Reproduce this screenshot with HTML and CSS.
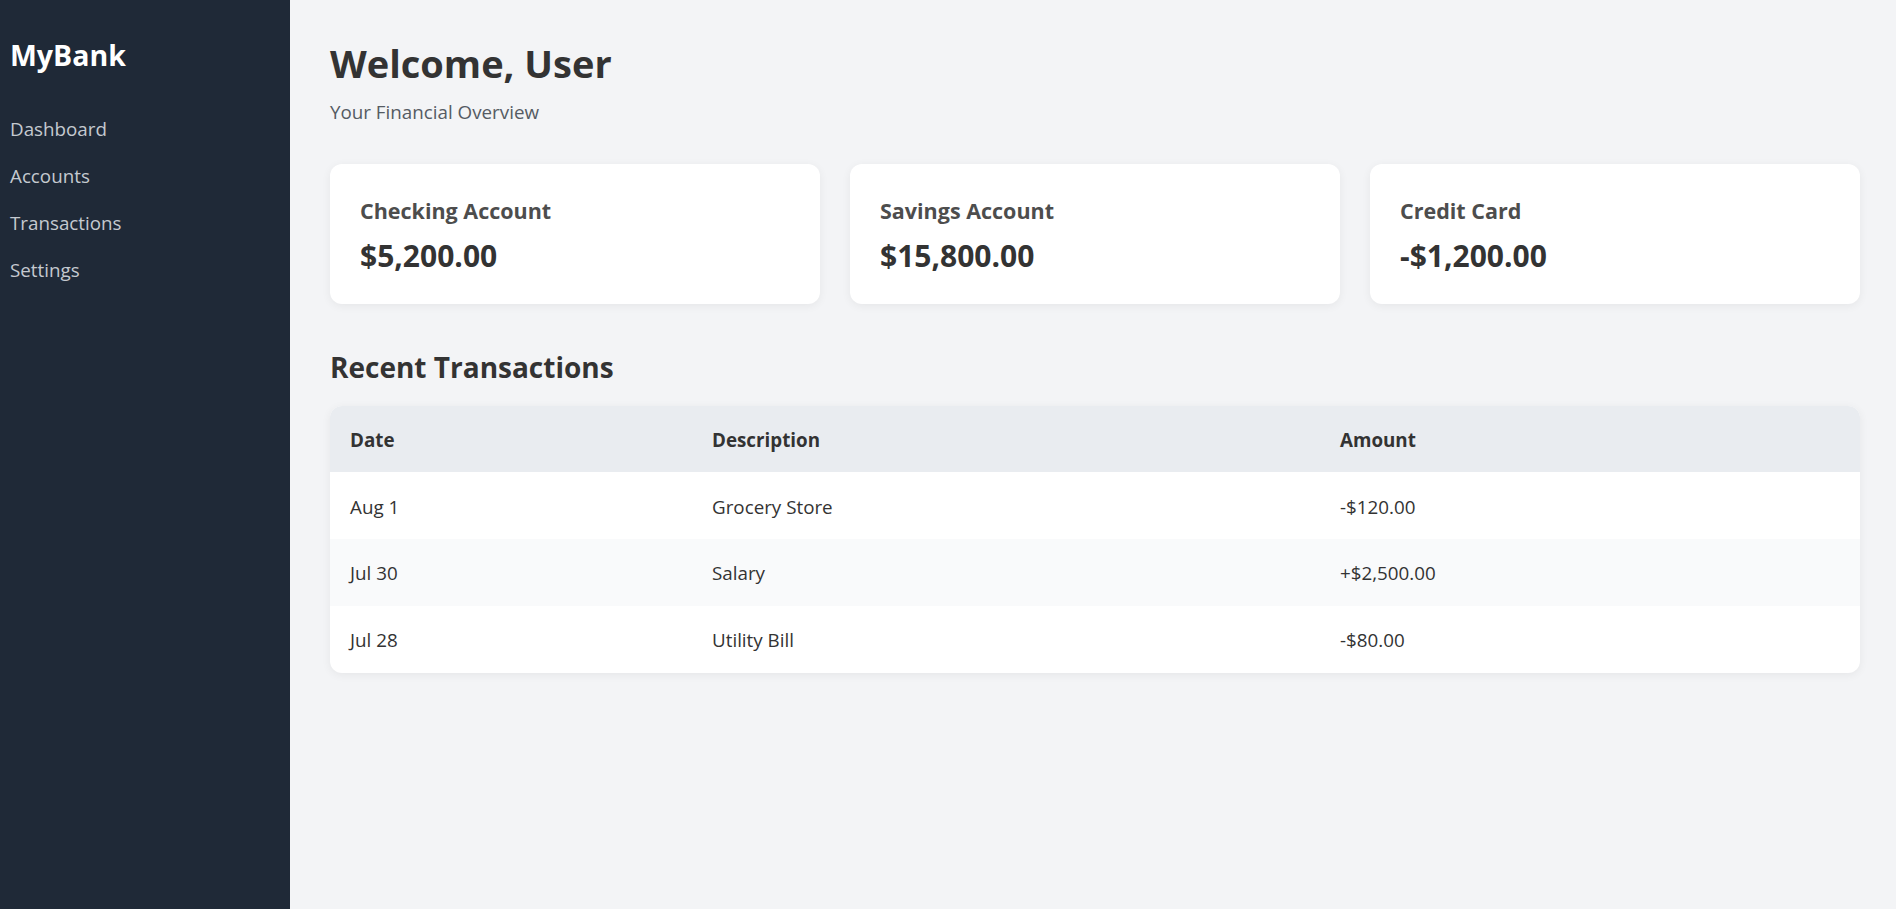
FILE: index.html
```html
<!DOCTYPE html>
<html lang="en">
<head>
<meta charset="utf-8">
<title>MyBank</title>
<link rel="stylesheet" href="styles.css">
</head>
<body>
<div class="app">
  <aside class="sidebar">
    <h2 class="brand">MyBank</h2>
    <nav class="nav">
      <a class="nav-link" href="#">Dashboard</a>
      <a class="nav-link" href="#">Accounts</a>
      <a class="nav-link" href="#">Transactions</a>
      <a class="nav-link" href="#">Settings</a>
    </nav>
  </aside>
  <main class="content">
    <h1 class="title">Welcome, User</h1>
    <p class="subtitle">Your Financial Overview</p>
    <section class="cards">
      <div class="card">
        <h3 class="card-title">Checking Account</h3>
        <p class="card-amount">$5,200.00</p>
      </div>
      <div class="card">
        <h3 class="card-title">Savings Account</h3>
        <p class="card-amount">$15,800.00</p>
      </div>
      <div class="card">
        <h3 class="card-title">Credit Card</h3>
        <p class="card-amount">-$1,200.00</p>
      </div>
    </section>
    <h2 class="section-title">Recent Transactions</h2>
    <div class="table-wrap">
      <table class="tx-table">
        <thead>
          <tr><th class="col-date">Date</th><th class="col-desc">Description</th><th>Amount</th></tr>
        </thead>
        <tbody>
          <tr><td>Aug 1</td><td>Grocery Store</td><td>-$120.00</td></tr>
          <tr><td>Jul 30</td><td>Salary</td><td>+$2,500.00</td></tr>
          <tr><td>Jul 28</td><td>Utility Bill</td><td>-$80.00</td></tr>
        </tbody>
      </table>
    </div>
  </main>
</div>
</body>
</html>
```
FILE: styles.css
```css
* { box-sizing: border-box; }
html, body { margin: 0; padding: 0; height: 100%; }
body {
  font-family: "Segoe UI", "Open Sans", "Noto Sans", sans-serif;
  font-size: 18.8px;
  color: #333333;
  background: #f3f4f6;
}
.app { display: flex; min-height: 100vh; }
.sidebar {
  width: 290px;
  flex-shrink: 0;
  background: #1f2937;
  padding: 38px 10px 0 10px;
}
.brand {
  margin: 0 0 33px 0;
  font-size: 28.5px;
  line-height: 34px;
  font-weight: 700;
  color: #ffffff;
}
.nav { display: flex; flex-direction: column; }
.nav-link {
  display: block;
  padding: 12.5px 0 11.5px 0;
  line-height: 23px;
  color: #c5c9d0;
  text-decoration: none;
}
.content {
  flex: 1;
  padding: 40px 36px 40px 40px;
}
.title {
  margin: 0;
  font-size: 38px;
  line-height: 46px;
  font-weight: 700;
  color: #333333;
}
.subtitle {
  margin: 15px 0 0 0;
  line-height: 23px;
  color: #555b63;
}
.cards {
  display: grid;
  grid-template-columns: repeat(3, 1fr);
  gap: 30px;
  margin-top: 40px;
}
.card {
  background: #ffffff;
  border-radius: 12px;
  padding: 33px 30px 0 30px;
  height: 140px;
  box-shadow: 0 2px 10px rgba(0, 0, 0, 0.06);
}
.card-title {
  margin: 0;
  font-size: 21.5px;
  line-height: 27px;
  font-weight: 700;
  color: #4d4d4d;
}
.card-amount {
  margin: 14px 0 0 0;
  font-size: 30px;
  line-height: 36px;
  font-weight: 700;
  color: #333333;
}
.section-title {
  margin: 45.5px 0 22px 0;
  font-size: 28px;
  line-height: 34px;
  font-weight: 700;
  color: #333333;
}
.table-wrap {
  background: #ffffff;
  border-radius: 12px;
  overflow: hidden;
  box-shadow: 0 2px 10px rgba(0, 0, 0, 0.06);
}
.tx-table {
  width: 100%;
  border-collapse: collapse;
}
.tx-table th, .tx-table td {
  text-align: left;
  padding: 23.3px 20px 20.3px 20px;
  line-height: 23.15px;
}
.tx-table th {
  background: #e9ecf0;
  font-weight: 700;
  color: #333333;
}
.tx-table td { color: #333333; }
.tx-table tbody tr:nth-child(even) td { background: #f9fafb; }
.col-date { width: 362px; }
.col-desc { width: 628px; }
```
